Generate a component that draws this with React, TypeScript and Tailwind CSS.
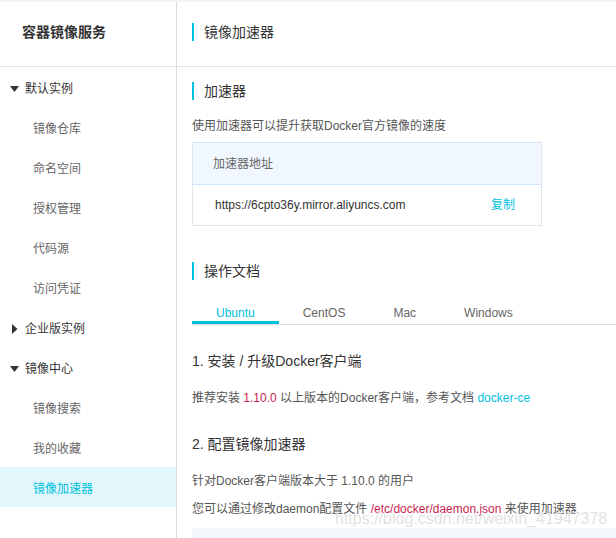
import React from 'react';

const font = { fontFamily: '"Liberation Sans", "Noto Sans CJK SC", sans-serif' };

// 侧边栏菜单
const menu: { label: string; type: 'group' | 'item'; open?: boolean; active?: boolean }[] = [
  { label: '默认实例', type: 'group', open: true },
  { label: '镜像仓库', type: 'item' },
  { label: '命名空间', type: 'item' },
  { label: '授权管理', type: 'item' },
  { label: '代码源', type: 'item' },
  { label: '访问凭证', type: 'item' },
  { label: '企业版实例', type: 'group', open: false },
  { label: '镜像中心', type: 'group', open: true },
  { label: '镜像搜索', type: 'item' },
  { label: '我的收藏', type: 'item' },
  { label: '镜像加速器', type: 'item', active: true },
];

const tabs = ['Ubuntu', 'CentOS', 'Mac', 'Windows'];

function Caret({ open }: { open?: boolean }) {
  return open ? (
    <svg width="9" height="6" viewBox="0 0 9 6" className="mr-[6px]">
      <path d="M0 0h9L4.5 6z" fill="#333" />
    </svg>
  ) : (
    <svg width="6" height="10" viewBox="0 0 6 10" className="mr-[7px] ml-[2px]">
      <path d="M0 0v10l5.5-5z" fill="#333" />
    </svg>
  );
}

function SectionTitle({ children }: { children: React.ReactNode }) {
  return (
    <div className="flex items-center h-[18px]">
      <span className="w-[2px] h-[18px] bg-[#00c1de]" />
      <span className="ml-[10px] text-[14px] text-[#333] leading-[18px]">{children}</span>
    </div>
  );
}

export default function App() {
  return (
    <div className="relative w-[616px] h-[538px] overflow-hidden bg-white flex border-t-2 border-[#f3f3f3]" style={font}>
      {/* 侧边栏 */}
      <aside className="w-[177px] shrink-0 border-r border-[#dcdcdc] flex flex-col">
        <div className="h-[65px] shrink-0 border-b border-[#e2e2e2] flex items-center pl-[22px] pb-[4px] text-[14px] font-bold text-[#333]">
          容器镜像服务
        </div>
        {menu.map((m) =>
          m.type === 'group' ? (
            <div key={m.label} className="h-[40px] shrink-0 flex items-center pl-[10px] pt-[3px] text-[12px] text-[#333]">
              <Caret open={m.open} />
              {m.label}
            </div>
          ) : (
            <div
              key={m.label}
              className={
                m.active
                  ? 'h-[40px] shrink-0 flex items-center pl-[33px] pt-[3px] text-[12px] text-[#00c1de] bg-[#e2f7fb]'
                  : 'h-[40px] shrink-0 flex items-center pl-[33px] pt-[3px] text-[12px] text-[#666]'
              }
            >
              {m.label}
            </div>
          )
        )}
      </aside>

      {/* 主内容 */}
      <main className="flex-1 flex flex-col min-h-0">
        <div className="h-[65px] shrink-0 border-b border-[#e2e2e2] flex items-center pl-[15px] pb-[4px]">
          <SectionTitle>镜像加速器</SectionTitle>
        </div>

        <div className="shrink-0 pl-[15px] pt-[15px]">
          <SectionTitle>加速器</SectionTitle>
          <p className="mt-[19px] text-[12px] leading-[14px] text-[#555]">使用加速器可以提升获取Docker官方镜像的速度</p>

          <div className="mt-[9px] w-[350px] border border-[#dbe6f1]">
            <div className="h-[42px] bg-[#f0f7ff] border-b border-[#cfe4f9] flex items-center pl-[20px] text-[12px] text-[#666]">
              加速器地址
            </div>
            <div className="h-[40px] flex items-center justify-between pl-[22px] pr-[26px] text-[12px]">
              <span className="text-[#333]">https://6cpto36y.mirror.aliyuncs.com</span>
              <span className="text-[#00c1de]">复制</span>
            </div>
          </div>

          <div className="mt-[36px]">
            <SectionTitle>操作文档</SectionTitle>
          </div>

          <div className="mt-[20px] flex border-b border-[#ddd]">
            {tabs.map((t, i) => (
              <div
                key={t}
                className={
                  i === 0
                    ? 'h-[24px] px-[24px] pt-[6px] text-[12px] text-[#00c1de] border-b-[3px] border-[#00c1de] -mb-px leading-[14px]'
                    : 'h-[24px] px-[24px] pt-[6px] text-[12px] text-[#666] leading-[14px]'
                }
              >
                {t}
              </div>
            ))}
          </div>

          <h3 className="mt-[27px] text-[14px] leading-[18px] text-[#333]">1. 安装 / 升级Docker客户端</h3>
          <p className="mt-[21px] text-[12px] leading-[14px] text-[#555]">
            推荐安装 <span className="text-[#c7254e]">1.10.0</span> 以上版本的Docker客户端，参考文档{' '}
            <span className="text-[#00c1de]">docker-ce</span>
          </p>

          <h3 className="mt-[30px] text-[14px] leading-[18px] text-[#333]">2. 配置镜像加速器</h3>
          <p className="mt-[21px] text-[12px] leading-[14px] text-[#555]">针对Docker客户端版本大于 1.10.0 的用户</p>
          <p className="mt-[14px] text-[12px] leading-[14px] text-[#555]">
            您可以通过修改daemon配置文件 <span className="text-[#c7254e]">/etc/docker/daemon.json</span> 来使用加速器
          </p>
          <div className="mt-[12px] h-[20px] bg-[#f3f8fd]" />
        </div>
      </main>

      {/* 水印 */}
      <div className="absolute left-[335px] top-[507px] text-[16px] leading-[20px] text-[#e3e3e3] pointer-events-none whitespace-nowrap">
        https://blog.csdn.net/weixin_41947378
      </div>
    </div>
  );
}
